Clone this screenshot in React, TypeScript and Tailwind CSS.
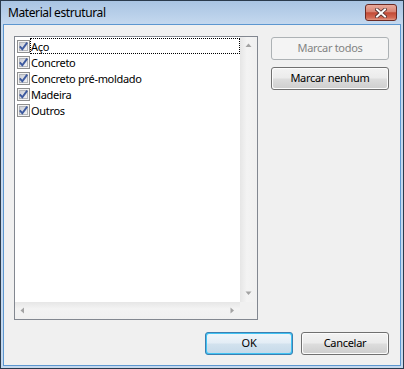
import React from "react";

const FONT = { fontFamily: '"Noto Sans", "Liberation Sans", sans-serif' };

function CheckBox({ id }: { id: string }) {
  return (
    <svg width="13" height="13" viewBox="0 0 13 13" className="shrink-0">
      <defs>
        <linearGradient id={id} x1="0" y1="0" x2="1" y2="1">
          <stop offset="0" stopColor="#c9ccd3" />
          <stop offset="1" stopColor="#f5f5f6" />
        </linearGradient>
      </defs>
      <rect x="0.5" y="0.5" width="12" height="12" fill="#f4f4f4" stroke="#8e8f8f" />
      <rect x="2.5" y="2.5" width="8" height="8" fill={`url(#${id})`} stroke="#b3b6bb" />
      <path d="M2.8 6.4 L5.3 9.2 L10.2 2.6" fill="none" stroke="#3d5a9f" strokeWidth="1.9" strokeLinejoin="miter" />
    </svg>
  );
}

function Arrow({ dir }: { dir: "up" | "down" | "left" | "right" }) {
  const pts: Record<string, string> = {
    up: "0.5,4 3.5,0.5 6.5,4",
    down: "0.5,0.5 3.5,4 6.5,0.5",
    left: "4,0.5 0.5,3.5 4,6.5",
    right: "0.5,0.5 4,3.5 0.5,6.5",
  };
  const vertical = dir === "up" || dir === "down";
  return (
    <svg width={vertical ? 7 : 5} height={vertical ? 5 : 7} viewBox={vertical ? "0 0 7 5" : "0 0 5 7"}>
      <polygon points={pts[dir]} fill="#a3a3a3" />
    </svg>
  );
}

function Btn({
  children,
  w,
  kind = "normal",
}: {
  children: React.ReactNode;
  w: string;
  kind?: "normal" | "default" | "disabled";
}) {
  if (kind === "disabled") {
    return (
      <div className={`${w} h-[23px] rounded-[3px] border border-[#adb2b5] bg-[#f4f4f4] flex items-center justify-center text-[11px] tracking-[-0.3px] text-[#838383]`}>
        {children}
      </div>
    );
  }
  if (kind === "default") {
    return (
      <div className={`${w} h-[23px] rounded-[3px] border border-[#3c7fb1] p-[1px] bg-[#40c3f3]`}>
        <div className="w-full h-full rounded-[2px] bg-[linear-gradient(to_bottom,#eef5fa_0%,#e3edf5_48%,#d2e2ee_52%,#c6dae9_100%)] flex items-center justify-center text-[11px] tracking-[-0.3px] text-black">
          {children}
        </div>
      </div>
    );
  }
  return (
    <div className={`${w} h-[23px] rounded-[3px] border border-[#707070] p-[1px] bg-[#fbfbfb]`}>
      <div className="w-full h-full rounded-[2px] bg-[linear-gradient(to_bottom,#f2f2f2_0%,#ebebeb_48%,#dddddd_52%,#cfcfcf_100%)] flex items-center justify-center text-[11px] tracking-[-0.3px] text-black">
        {children}
      </div>
    </div>
  );
}

export default function App() {
  const items = ["Aço", "Concreto", "Concreto pré-moldado", "Madeira", "Outros"];
  return (
    <div style={FONT} className="w-[404px] h-[369px] border border-[#2a3a4c] bg-[#c4d8ee] flex flex-col select-none">
      {/* Title bar */}
      <div className="h-[23px] shrink-0 flex items-center justify-between pl-[7px] pr-[6px] bg-[linear-gradient(to_bottom,#a9c4e3,#c4d8ee)]">
        <span className="text-[12px] tracking-[-0.4px] text-black leading-none mt-[1px]">Material estrutural</span>
        <div className="w-[32px] h-[17px] rounded-[3px] border border-[#6b2a24] bg-[linear-gradient(to_bottom,#e9aa9c_0%,#d88474_45%,#c24a36_52%,#d36a55_85%,#e19a86_100%)] flex items-center justify-center">
          <svg width="12" height="10" viewBox="0 0 12 10">
            <path d="M2 1.5 L10 8.5 M10 1.5 L2 8.5" stroke="#4a2a2a" strokeWidth="3.6" strokeLinecap="square" />
            <path d="M2 1.5 L10 8.5 M10 1.5 L2 8.5" stroke="#ffffff" strokeWidth="2" strokeLinecap="square" />
          </svg>
        </div>
      </div>
      {/* Client */}
      <div className="flex-1 mx-[2px] mb-[2px] border border-[#5d97d0] bg-[#f0f0f0] flex flex-col pt-[11px] pl-[10px] pr-[11px]">
        <div className="flex gap-[13px]">
          {/* List box */}
          <div className="w-[245px] h-[284px] border border-[#828790] bg-white flex flex-col">
            <div className="flex flex-1 min-h-0">
              <div className="flex-1 flex flex-col pt-[1px] pl-[2px]">
                {items.map((t, i) => (
                  <div key={t} className="h-[16px] flex items-center">
                    <CheckBox id={`cbg${i}`} />
                    <span
                      className={`flex-1 h-[16px] flex items-center text-[11px] tracking-[-0.3px] text-black leading-none border border-dotted ${
                        i === 0 ? "border-black" : "border-transparent"
                      }`}
                    >
                      {t}
                    </span>
                  </div>
                ))}
              </div>
              <div className="w-[17px] flex flex-col bg-[linear-gradient(to_right,#e6e6e6,#f3f3f3_40%,#f0f0f0)]">
                <div className="h-[17px] flex items-center justify-center">
                  <Arrow dir="up" />
                </div>
                <div className="flex-1" />
                <div className="h-[17px] flex items-center justify-center">
                  <Arrow dir="down" />
                </div>
              </div>
            </div>
            <div className="h-[17px] flex">
              <div className="flex-1 flex items-center justify-between px-[5px] bg-[linear-gradient(to_bottom,#e6e6e6,#f3f3f3_40%,#f0f0f0)]">
                <Arrow dir="left" />
                <Arrow dir="right" />
              </div>
              <div className="w-[17px] bg-[#f0f0f0]" />
            </div>
          </div>
          {/* Side buttons */}
          <div className="flex flex-col gap-[7px] mt-[1px]">
            <Btn w="w-[118px]" kind="disabled">Marcar todos</Btn>
            <Btn w="w-[118px]">Marcar nenhum</Btn>
          </div>
        </div>
        <div className="flex justify-end gap-[8px] mt-[12px]">
          <Btn w="w-[88px]" kind="default">OK</Btn>
          <Btn w="w-[88px]">Cancelar</Btn>
        </div>
      </div>
    </div>
  );
}
